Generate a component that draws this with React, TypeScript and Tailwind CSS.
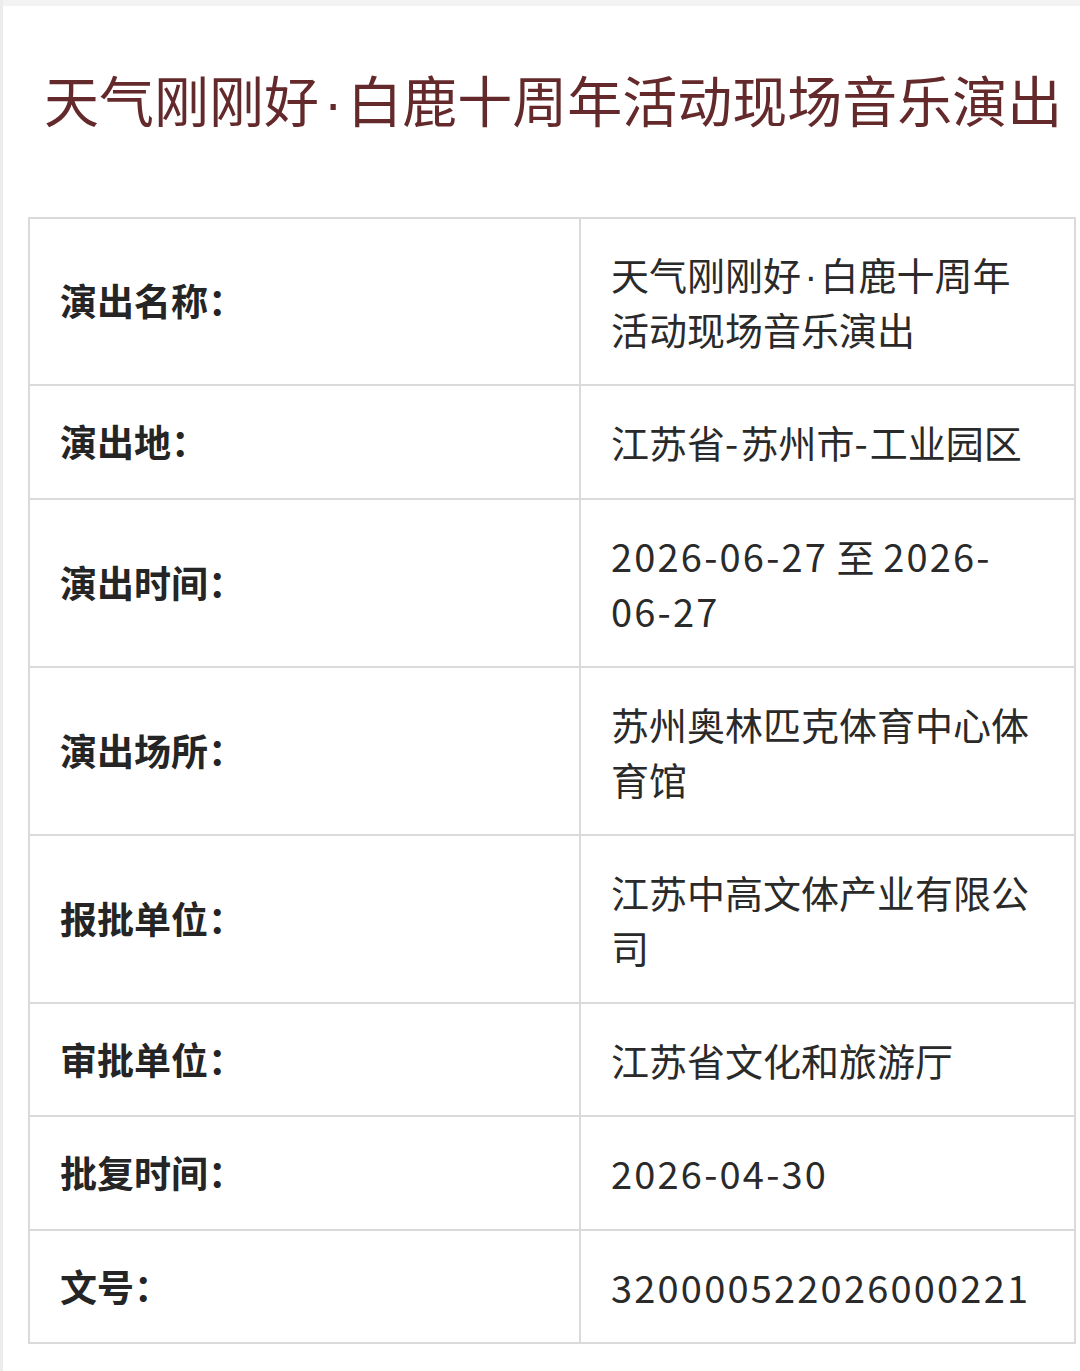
import React from "react";

interface Row {
  label: string;
  value: string;
}

const rows: Row[] = [
  { label: "演出名称：", value: "天气刚刚好·白鹿十周年活动现场音乐演出" },
  { label: "演出地：", value: "江苏省-苏州市-工业园区" },
  { label: "演出时间：", value: "2026-06-27 至 2026-06-27" },
  { label: "演出场所：", value: "苏州奥林匹克体育中心体育馆" },
  { label: "报批单位：", value: "江苏中高文体产业有限公司" },
  { label: "审批单位：", value: "江苏省文化和旅游厅" },
  { label: "批复时间：", value: "2026-04-30" },
  { label: "文号：", value: "320000522026000221" },
];

// the CJK font draws · full width, so it gets a latin face
const Dot = () => (
  <span
    className="mx-[0.09em] leading-[0px]"
    style={{ fontFamily: '"Liberation Sans", sans-serif' }}
  >
    ·
  </span>
);

// digits and dashes run a little wider than the CJK font gives them
const Value = ({ text }: { text: string }) => {
  const parts = text.split(/([0-9-]+|·)/).filter((p) => p !== "");
  return (
    <span>
      {parts.map((p, i) =>
        p === "·" ? (
          <Dot key={i} />
        ) : /^[0-9-]+$/.test(p) ? (
          <span key={i} className="tracking-[2.2px]">
            {p}
          </span>
        ) : (
          <React.Fragment key={i}>{p}</React.Fragment>
        )
      )}
    </span>
  );
};

const App = () => {
  return (
    <div
      className="w-[1080px] h-[1371px] bg-white border-l-[3px] border-[#ececec] overflow-hidden"
      style={{ fontFamily: '"Noto Sans CJK SC", "Noto Sans", sans-serif' }}
    >
      <div className="h-[6px] bg-[#f3f3f3]" />
      <h1 className="pl-[41px] pt-[60px] h-[211px] text-[55px] leading-[64px] font-normal text-[#64292b] whitespace-nowrap">
        天气刚刚好<Dot />白鹿十周年活动现场音乐演出
      </h1>
      <div className="ml-[25px] w-[1048px] border-2 border-[#dadada]">
        {rows.map((row, i) => (
          <div
            key={row.label}
            className={
              i === 0
                ? "grid grid-cols-[551px_1fr]"
                : "grid grid-cols-[551px_1fr] border-t-2 border-[#dadada]"
            }
          >
            <div
              className={
                i === 0
                  ? "flex items-center pl-[30px] pt-[27px] pb-[28px] text-[37px] font-bold text-[#252525] border-r-2 border-[#dadada]"
                  : "flex items-center pl-[30px] py-[28px] text-[37px] font-bold text-[#252525] border-r-2 border-[#dadada]"
              }
            >
              {row.label}
            </div>
            <div
              className={
                i === 0
                  ? "flex items-center pl-[30px] pr-[40px] pt-[27px] pb-[28px] text-[38px] leading-[55px] text-[#2a2a2a]"
                  : "flex items-center pl-[30px] pr-[40px] py-[28px] text-[38px] leading-[55px] text-[#2a2a2a]"
              }
            >
              <Value text={row.value} />
            </div>
          </div>
        ))}
      </div>
    </div>
  );
};

export default App;
